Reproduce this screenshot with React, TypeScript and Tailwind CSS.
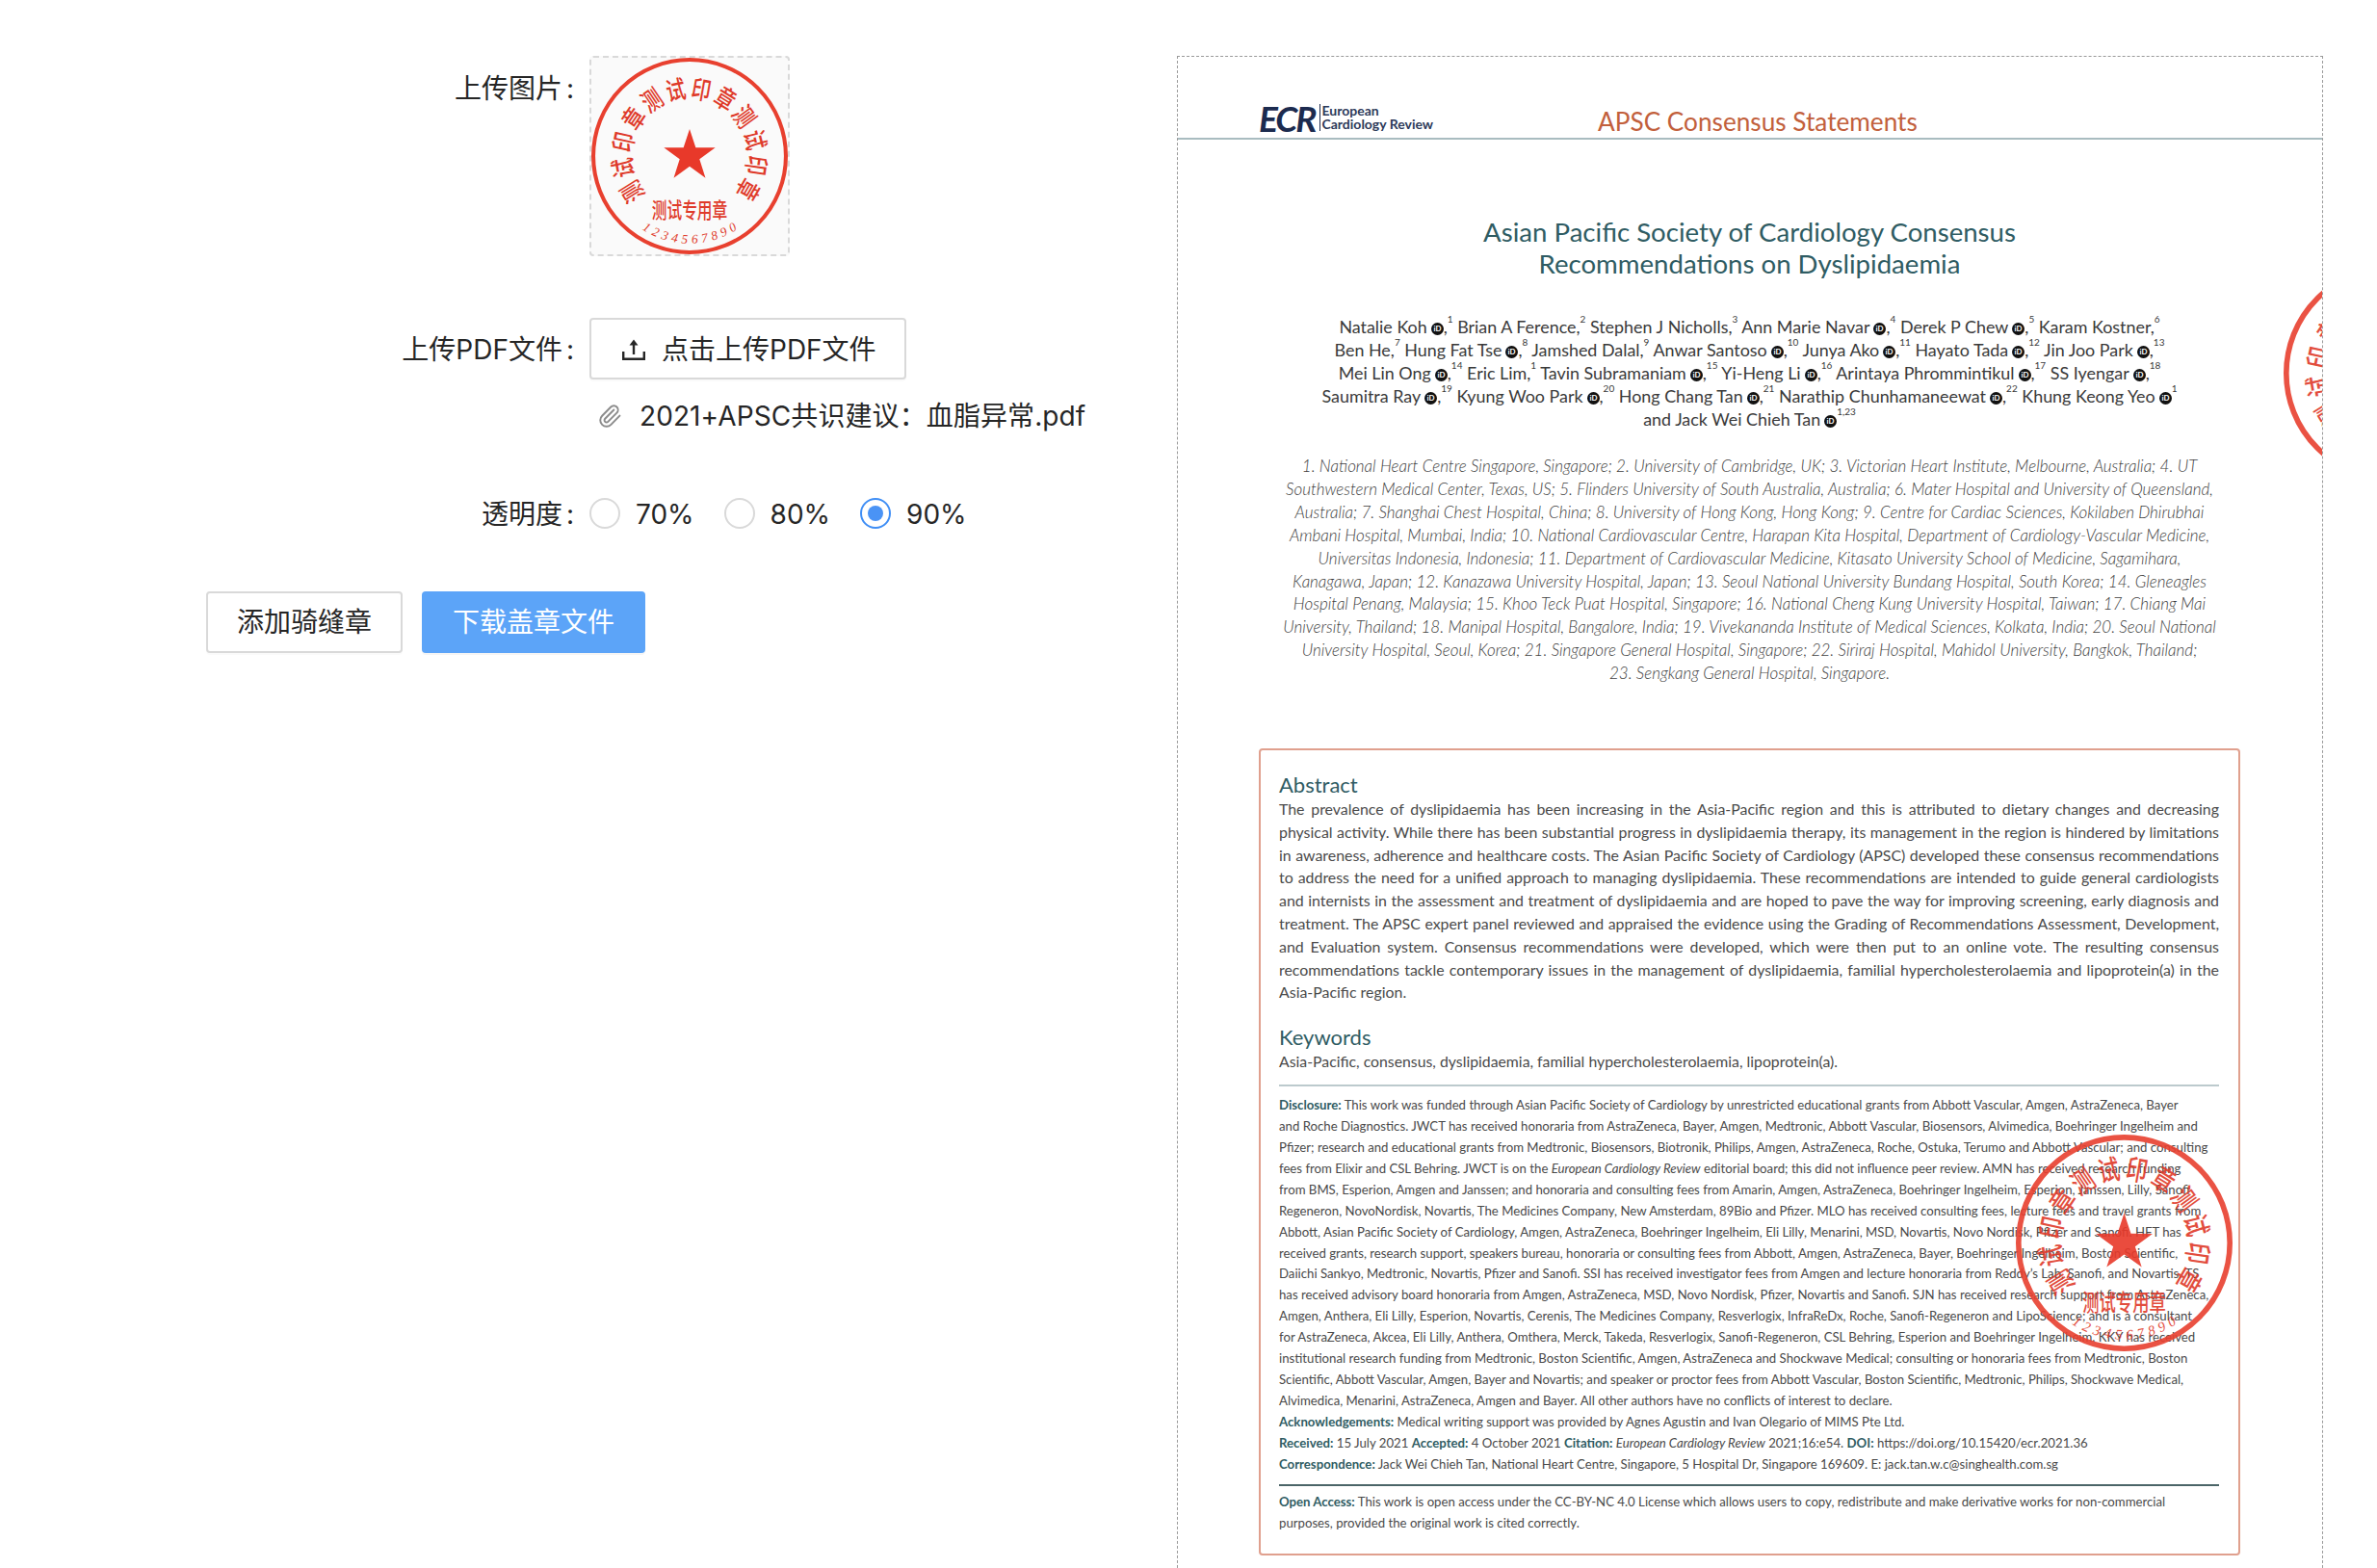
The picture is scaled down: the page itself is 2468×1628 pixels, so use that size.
import React from "react";
import { Paperclip } from "lucide-react";

const ringChars = "测试印章测试印章测试印章".split("");

function Seal({ className, stroke = 4.5 }: { className: string; stroke?: number }) {
  const star = Array.from({ length: 10 }, (_, i) => {
    const r = i % 2 === 0 ? 27.5 : 10.6;
    const a = (i * 36 * Math.PI) / 180;
    return `${(r * Math.sin(a)).toFixed(2)},${(-r * Math.cos(a)).toFixed(2)}`;
  }).join(" ");
  return (
    <svg viewBox="-100 -100 200 200" className={className}>
      <circle cx="0" cy="0" r={100 - stroke / 2} fill="none" stroke="#e8402f" strokeWidth={stroke} />
      <polygon points={star} fill="#e8392a" />
      <g fill="#df3a2a" fontSize="26" fontWeight="500" textAnchor="middle">
        {ringChars.map((c, i) => {
          const a = -122 + i * 22;
          return (
            <text key={i} transform={`rotate(${a}) translate(0 -59) scale(0.76 1)`} x="0" y="0">
              {c}
            </text>
          );
        })}
      </g>
      <text transform="translate(0 63) scale(1 1.4)" fill="#df3a2a" fontSize="15.4" fontWeight="500" textAnchor="middle">
        测试专用章
      </text>
      <g fill="#df3a2a" fontSize="13" textAnchor="middle" className="font-['Liberation_Serif',serif]" fontStyle="italic">
        {"1234567890".split("").map((c, i) => {
          const t = -31 + (i * 62) / 9;
          return (
            <text key={i} transform={`rotate(${-t}) translate(0 89)`} x="0" y="0">
              {c}
            </text>
          );
        })}
      </g>
    </svg>
  );
}

function Orcid() {
  return (
    <svg viewBox="0 0 14 14" className="inline-block w-[13px] h-[13px] align-[-2px] ml-[4px]">
      <circle cx="7" cy="7" r="7" fill="#111" />
      <text x="7" y="10" fontSize="8.5" fontWeight="700" fill="#fff" textAnchor="middle">
        iD
      </text>
    </svg>
  );
}

function Au({ n, s, o, nc }: { n: string; s: string; o?: boolean; nc?: boolean }) {
  return (
    <>
      {n}
      {o ? <Orcid /> : null}
      {nc ? "" : ","}
      <sup className="text-[10px] leading-none align-[6px]">{s}</sup>{" "}
    </>
  );
}

const affiliations = [
  "1. National Heart Centre Singapore, Singapore; 2. University of Cambridge, UK; 3. Victorian Heart Institute, Melbourne, Australia; 4. UT",
  "Southwestern Medical Center, Texas, US; 5. Flinders University of South Australia, Australia; 6. Mater Hospital and University of Queensland,",
  "Australia; 7. Shanghai Chest Hospital, China; 8. University of Hong Kong, Hong Kong; 9. Centre for Cardiac Sciences, Kokilaben Dhirubhai",
  "Ambani Hospital, Mumbai, India; 10. National Cardiovascular Centre, Harapan Kita Hospital, Department of Cardiology-Vascular Medicine,",
  "Universitas Indonesia, Indonesia; 11. Department of Cardiovascular Medicine, Kitasato University School of Medicine, Sagamihara,",
  "Kanagawa, Japan; 12. Kanazawa University Hospital, Japan; 13. Seoul National University Bundang Hospital, South Korea; 14. Gleneagles",
  "Hospital Penang, Malaysia; 15. Khoo Teck Puat Hospital, Singapore; 16. National Cheng Kung University Hospital, Taiwan; 17. Chiang Mai",
  "University, Thailand; 18. Manipal Hospital, Bangalore, India; 19. Vivekananda Institute of Medical Sciences, Kolkata, India; 20. Seoul National",
  "University Hospital, Seoul, Korea; 21. Singapore General Hospital, Singapore; 22. Siriraj Hospital, Mahidol University, Bangkok, Thailand;",
  "23. Sengkang General Hospital, Singapore.",
];

const abstractLines = [
  "The prevalence of dyslipidaemia has been increasing in the Asia-Pacific region and this is attributed to dietary changes and decreasing",
  "physical activity. While there has been substantial progress in dyslipidaemia therapy, its management in the region is hindered by limitations",
  "in awareness, adherence and healthcare costs. The Asian Pacific Society of Cardiology (APSC) developed these consensus recommendations",
  "to address the need for a unified approach to managing dyslipidaemia. These recommendations are intended to guide general cardiologists",
  "and internists in the assessment and treatment of dyslipidaemia and are hoped to pave the way for improving screening, early diagnosis and",
  "treatment. The APSC expert panel reviewed and appraised the evidence using the Grading of Recommendations Assessment, Development,",
  "and Evaluation system. Consensus recommendations were developed, which were then put to an online vote. The resulting consensus",
  "recommendations tackle contemporary issues in the management of dyslipidaemia, familial hypercholesterolaemia and lipoprotein(a) in the",
];

const B = ({ children }: { children: React.ReactNode }) => (
  <span className="font-bold text-[#2f5c63]">{children}</span>
);

const disclosure: React.ReactNode[] = [
  <><B>Disclosure:</B> This work was funded through Asian Pacific Society of Cardiology by unrestricted educational grants from Abbott Vascular, Amgen, AstraZeneca, Bayer</>,
  "and Roche Diagnostics. JWCT has received honoraria from AstraZeneca, Bayer, Amgen, Medtronic, Abbott Vascular, Biosensors, Alvimedica, Boehringer Ingelheim and",
  "Pfizer; research and educational grants from Medtronic, Biosensors, Biotronik, Philips, Amgen, AstraZeneca, Roche, Ostuka, Terumo and Abbott Vascular; and consulting",
  <>fees from Elixir and CSL Behring. JWCT is on the <i>European Cardiology Review</i> editorial board; this did not influence peer review. AMN has received research funding</>,
  "from BMS, Esperion, Amgen and Janssen; and honoraria and consulting fees from Amarin, Amgen, AstraZeneca, Boehringer Ingelheim, Esperion, Janssen, Lilly, Sanofi",
  "Regeneron, NovoNordisk, Novartis, The Medicines Company, New Amsterdam, 89Bio and Pfizer. MLO has received consulting fees, lecture fees and travel grants from",
  "Abbott, Asian Pacific Society of Cardiology, Amgen, AstraZeneca, Boehringer Ingelheim, Eli Lilly, Menarini, MSD, Novartis, Novo Nordisk, Pfizer and Sanofi. HFT has",
  "received grants, research support, speakers bureau, honoraria or consulting fees from Abbott, Amgen, AstraZeneca, Bayer, Boehringer Ingelheim, Boston Scientific,",
  "Daiichi Sankyo, Medtronic, Novartis, Pfizer and Sanofi. SSI has received investigator fees from Amgen and lecture honoraria from Reddy’s Lab, Sanofi, and Novartis. TS",
  "has received advisory board honoraria from Amgen, AstraZeneca, MSD, Novo Nordisk, Pfizer, Novartis and Sanofi. SJN has received research support from AstraZeneca,",
  "Amgen, Anthera, Eli Lilly, Esperion, Novartis, Cerenis, The Medicines Company, Resverlogix, InfraReDx, Roche, Sanofi-Regeneron and LipoScience; and is a consultant",
  "for AstraZeneca, Akcea, Eli Lilly, Anthera, Omthera, Merck, Takeda, Resverlogix, Sanofi-Regeneron, CSL Behring, Esperion and Boehringer Ingelheim. KKY has received",
  "institutional research funding from Medtronic, Boston Scientific, Amgen, AstraZeneca and Shockwave Medical; consulting or honoraria fees from Medtronic, Boston",
  "Scientific, Abbott Vascular, Amgen, Bayer and Novartis; and speaker or proctor fees from Abbott Vascular, Boston Scientific, Medtronic, Philips, Shockwave Medical,",
  "Alvimedica, Menarini, AstraZeneca, Amgen and Bayer. All other authors have no conflicts of interest to declare.",
  <><B>Acknowledgements:</B> Medical writing support was provided by Agnes Agustin and Ivan Olegario of MIMS Pte Ltd.</>,
  <><B>Received:</B> 15 July 2021 <B>Accepted:</B> 4 October 2021 <B>Citation:</B> <i>European Cardiology Review</i> 2021;16:e54. <B>DOI:</B> https://doi.org/10.15420/ecr.2021.36</>,
  <><B>Correspondence:</B> Jack Wei Chieh Tan, National Heart Centre, Singapore, 5 Hospital Dr, Singapore 169609. E: jack.tan.w.c@singhealth.com.sg</>,
];

function Label({ children, top }: { children: React.ReactNode; top?: boolean }) {
  return (
    <div
      className={`w-[612px] shrink-0 pr-[14px] text-right text-[28px] leading-[44px] whitespace-nowrap ${
        top ? "pt-[12px]" : "pt-[2px]"
      }`}
    >
      {children}
      <span className="ml-[4px] mr-[2px]">:</span>
    </div>
  );
}

function Radio({ label, checked }: { label: string; checked?: boolean }) {
  return (
    <div className="flex items-center gap-[16px]">
      <span
        className={`flex items-center justify-center w-[32px] h-[32px] rounded-full border-2 bg-white ${
          checked ? "border-[#3f8ef5]" : "border-[#d9d9d9]"
        }`}
      >
        {checked ? <span className="w-[16px] h-[16px] rounded-full bg-[#4a93f5]" /> : null}
      </span>
      <span className="text-[28px] leading-[44px] pt-[2px]">{label}</span>
    </div>
  );
}

export default function App() {
  return (
    <div className="flex h-[1628px] overflow-hidden bg-white text-[#262626] font-['Inter','Noto_Sans_CJK_SC',sans-serif]">
      <div className="w-[1222px] shrink-0 pt-[58px]">
        <div className="flex">
          <Label top>上传图片</Label>
          <div className="flex items-center justify-center w-[208px] h-[208px] rounded-[4px] border-2 border-dashed border-[#d9d9d9] bg-[#fafafa]">
            <Seal className="w-[204px] h-[204px] shrink-0 font-['Noto_Sans_CJK_SC',serif]" stroke={4} />
          </div>
        </div>

        <div className="flex items-center mt-[64px]">
          <Label>上传PDF文件</Label>
          <button className="flex items-center h-[64px] w-[329px] pl-[32px] pt-[2px] rounded-[4px] border-2 border-[#d9d9d9] bg-white shadow-[0_2px_0_rgba(0,0,0,0.02)] text-[28px]">
            <svg viewBox="0 0 24 22" className="w-[24px] h-[22px] mr-[17px]" fill="none" stroke="#262626" strokeWidth="2.4">
              <path d="M12 16V3" />
              <path d="M12 0.5 L7.5 6.5 H16.5 Z" fill="#262626" stroke="none" />
              <path d="M1.2 13V20.8H22.8V13" />
            </svg>
            点击上传PDF文件
          </button>
        </div>

        <div className="flex items-center ml-[612px] mt-[15px] h-[44px] pt-[2px] pl-[8px] text-[28px] tracking-[0.1px] whitespace-nowrap">
          <Paperclip className="w-[26px] h-[26px] mr-[18px] text-[#8c8c8c]" strokeWidth={1.8} />
          2021+APSC共识建议：血脂异常.pdf
        </div>

        <div className="flex items-center mt-[57px]">
          <Label>透明度</Label>
          <div className="flex items-center gap-[31px]">
            <Radio label="70%" />
            <Radio label="80%" />
            <Radio label="90%" checked />
          </div>
        </div>

        <div className="flex gap-[20px] ml-[214px] mt-[58px]">
          <button className="h-[64px] w-[204px] rounded-[4px] border-2 border-[#d9d9d9] bg-white shadow-[0_2px_0_rgba(0,0,0,0.02)] text-[28px]">
            添加骑缝章
          </button>
          <button className="h-[64px] w-[232px] rounded-[4px] bg-[#5ca4f8] text-white shadow-[0_2px_0_rgba(0,0,0,0.04)] text-[28px]">
            下载盖章文件
          </button>
        </div>
      </div>

      <div className="relative mt-[58px] w-[1190px] h-[1600px] shrink-0 overflow-hidden border border-dashed border-[#9a9a9a] text-[#4a4a4a] font-['Lato',sans-serif]">
        <div className="flex items-end h-[86px] border-b-2 border-[#a9bcc0] pl-[84px]">
          <div className="flex items-center w-[352px] h-[36px] mb-[3px]">
            <span className="font-bold italic text-[37px] leading-none tracking-[-2px] text-[#1c2b4f]">ECR</span>
            <div className="ml-[5px] pl-[1px] border-l border-[#1c2b4f] text-[14px] leading-[14px] font-bold text-[#2d3a59] whitespace-nowrap">
              <div>European</div>
              <div>Cardiology Review</div>
            </div>
          </div>
          <span className="text-[26.2px] leading-[34px] text-[#c2603c] whitespace-nowrap">APSC Consensus Statements</span>
        </div>

        <div className="w-[1019px] ml-[84px]">
          <div className="mt-[79px] text-center text-[27.6px] leading-[33px] text-[#2f5c63]">
            <div>Asian Pacific Society of Cardiology Consensus</div>
            <div>Recommendations on Dyslipidaemia</div>
          </div>

          <div className="mt-[37px] text-center text-[17.9px] leading-[24px] text-[#3a3a3a] whitespace-nowrap">
            <div>
              <Au n="Natalie Koh" s="1" o /><Au n="Brian A Ference" s="2" /><Au n="Stephen J Nicholls" s="3" /><Au n="Ann Marie Navar" s="4" o /><Au n="Derek P Chew" s="5" o /><Au n="Karam Kostner" s="6" />
            </div>
            <div>
              <Au n="Ben He" s="7" /><Au n="Hung Fat Tse" s="8" o /><Au n="Jamshed Dalal" s="9" /><Au n="Anwar Santoso" s="10" o /><Au n="Junya Ako" s="11" o /><Au n="Hayato Tada" s="12" o /><Au n="Jin Joo Park" s="13" o />
            </div>
            <div>
              <Au n="Mei Lin Ong" s="14" o /><Au n="Eric Lim" s="1" /><Au n="Tavin Subramaniam" s="15" o /><Au n="Yi-Heng Li" s="16" o /><Au n="Arintaya Phrommintikul" s="17" o /><Au n="SS Iyengar" s="18" o />
            </div>
            <div>
              <Au n="Saumitra Ray" s="19" o /><Au n="Kyung Woo Park" s="20" o /><Au n="Hong Chang Tan" s="21" o /><Au n="Narathip Chunhamaneewat" s="22" o /><Au n="Khung Keong Yeo" s="1" o nc />
            </div>
            <div>
              and Jack Wei Chieh Tan<Au n="" s="1,23" o nc />
            </div>
          </div>

          <div className="mt-[25px] text-center text-[17px] leading-[23.9px] italic font-light text-[#404040] whitespace-nowrap">
            {affiliations.map((l, i) => (
              <div key={i}>{l}</div>
            ))}
          </div>

          <div className="mt-[66px] h-[838px] rounded-[4px] border-2 border-[#e0a08e] px-[19px] pt-[23px]">
            <div className="text-[22px] leading-[26px] text-[#2f5c63]">Abstract</div>
            <div className="w-[976px] text-[15.9px] leading-[23.8px] text-[#4a4a4a]">
              {abstractLines.map((l, i) => (
                <div key={i} className="text-justify [text-align-last:justify]">
                  {l}
                </div>
              ))}
              <div>Asia-Pacific region.</div>
            </div>
            <div className="mt-[22px] text-[22px] leading-[26px] text-[#2f5c63]">Keywords</div>
            <div className="text-[15.8px] leading-[24px] text-[#4a4a4a]">
              Asia-Pacific, consensus, dyslipidaemia, familial hypercholesterolaemia, lipoprotein(a).
            </div>
            <div className="w-[976px] mt-[12px] h-[2px] bg-[#bccacd]" />
            <div className="mt-[9px] text-[13.2px] leading-[21.9px] text-[#4a4a4a] whitespace-nowrap">
              {disclosure.map((l, i) => (
                <div key={i}>{l}</div>
              ))}
            </div>
            <div className="w-[976px] mt-[9px] h-[2px] bg-[#4b6568]" />
            <div className="mt-[5px] text-[13.2px] leading-[22px] text-[#4a4a4a] whitespace-nowrap">
              <div>
                <B>Open Access:</B> This work is open access under the CC-BY-NC 4.0 License which allows users to copy, redistribute and make derivative works for non-commercial
              </div>
              <div>purposes, provided the original work is cited correctly.</div>
            </div>
          </div>
        </div>

        <Seal className="absolute left-[1148px] top-[216px] w-[225px] h-[225px] opacity-90 font-['Noto_Sans_CJK_SC',serif]" stroke={5} />
        <Seal className="absolute left-[870px] top-[1119px] w-[225px] h-[225px] opacity-90 font-['Noto_Sans_CJK_SC',serif]" stroke={5} />
      </div>
    </div>
  );
}
